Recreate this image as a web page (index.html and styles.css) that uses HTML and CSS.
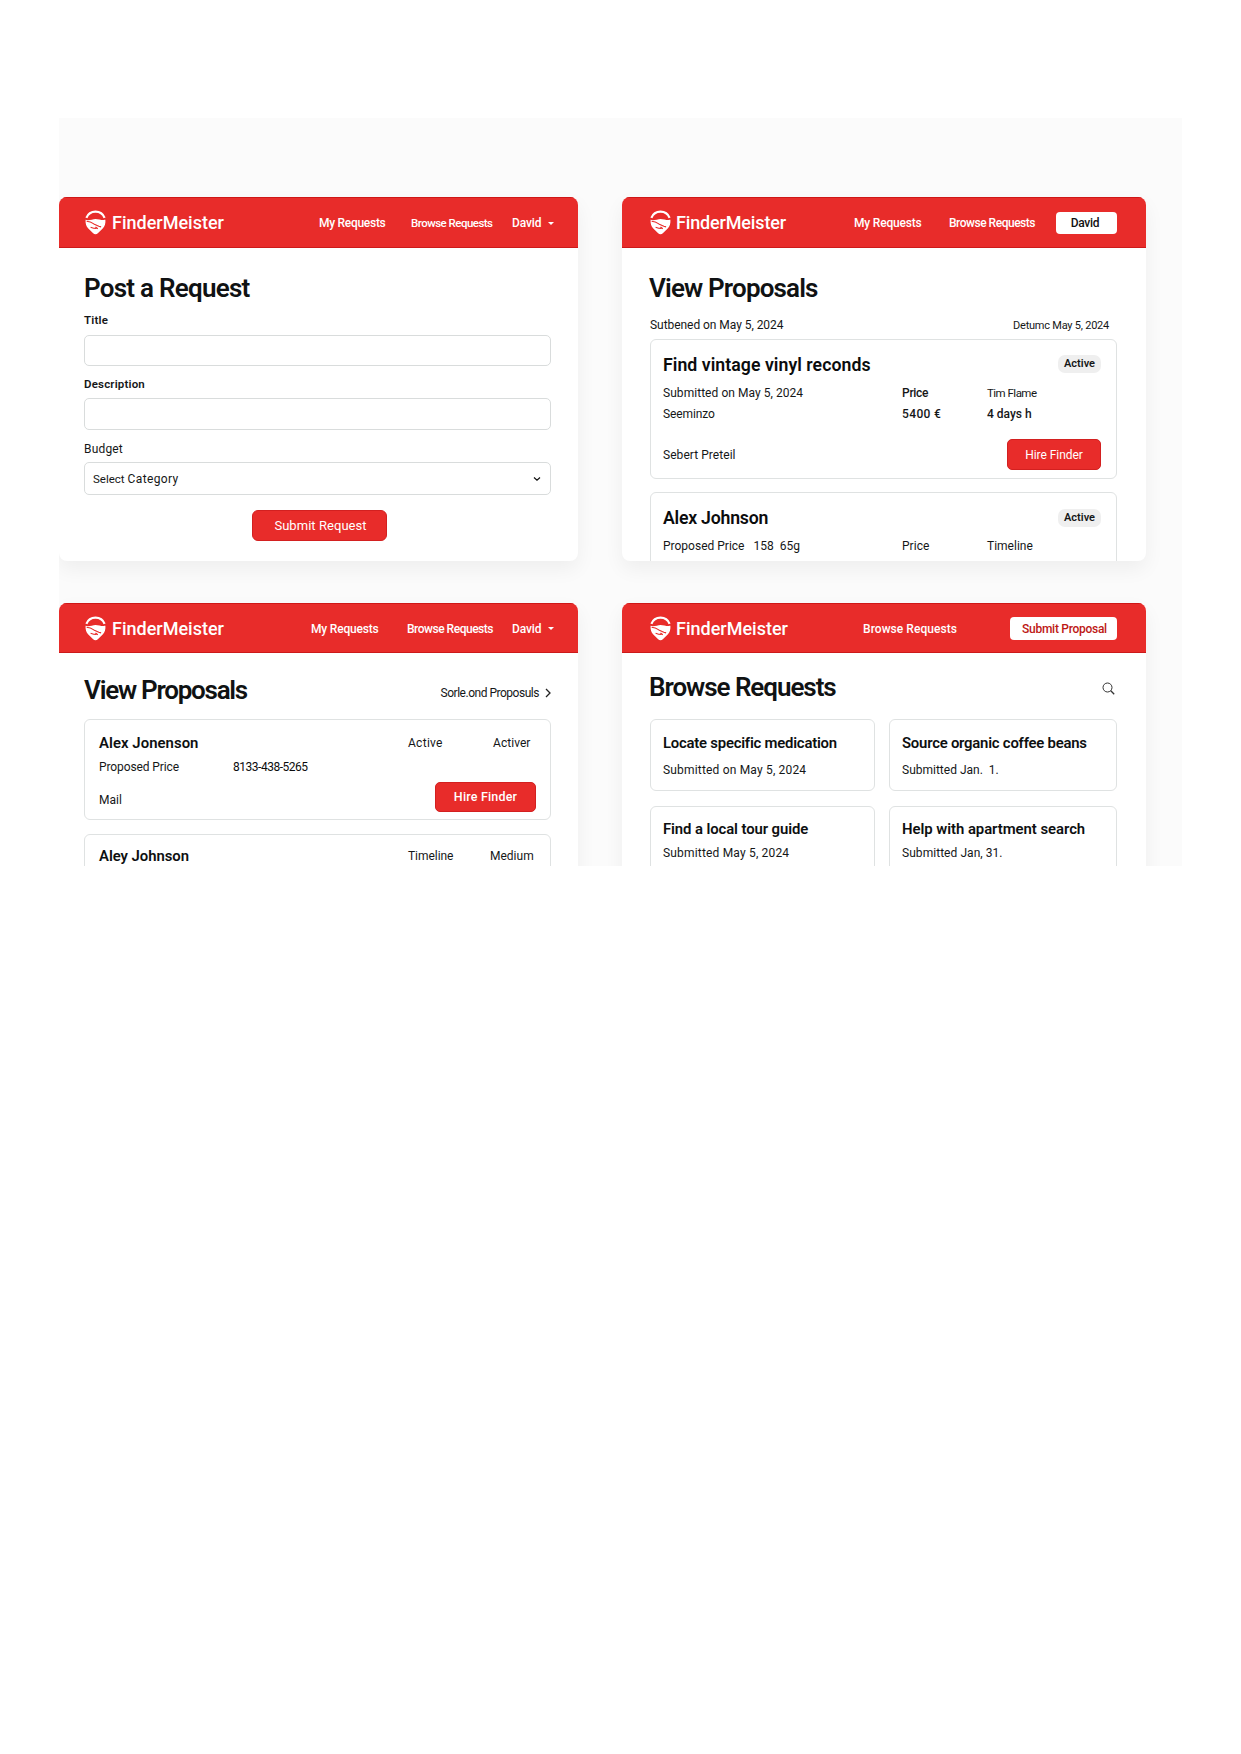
FILE: index.html
```
<!DOCTYPE html>
<html lang="en">
<head>
<meta charset="utf-8">
<title>FinderMeister</title>
<link rel="stylesheet" href="styles.css">
</head>
<body>
<svg class="defs" width="0" height="0">
  <symbol id="pin" viewBox="0 0 21 25">
    <path d="M1.400 7.800C3.200 3.200 6.600 1.600 10.500 1.600s7.300 1.600 9.100 6.200" fill="none" stroke="#fff" stroke-width="2.200"/>
    <path d="M.6 9.800C4 11 7.500 8.900 10.500 8.900s6.500 1.500 9.900.9c.3 3.600-.6 6.600-2.700 8.800l-4.600 4.300c-1.600 1.700-3.600 1.700-5.200 0l-4.600-4.300C1.200 16.400.3 13.400.6 9.800Z" fill="#fff"/>
    <path d="M1.600 11.300c2.800.2 5 1.100 7.200 2.600l5 2.400 2.300.6M5.600 17.200l3 1 2.600.2M10.500 17l2.300 1.700" fill="none" stroke="#e82c2a" stroke-width="1.100"/>
  </symbol>
</svg>
<main class="stage">
  <section class="panel panel-left">
    <header class="bar">
      <svg class="logo"><use href="#pin"/></svg><span class="brand">FinderMeister</span>
      <nav class="nav nav-post"><a class="ls-m28">My Requests</a><a class="tight">Browse Requests</a><a class="ls-m10">David<i class="caret"></i></a></nav>
    </header>
    <form class="post">
      <h1 class="ls-m75">Post a Request</h1>
      <label class="label strong ls-18">Title</label>
      <div class="field field-title"></div>
      <label class="label strong ls-18 label-desc">Description</label>
      <div class="field field-desc"></div>
      <label class="label ls-18 label-budget">Budget</label>
      <div class="field select"><span class="sel">Select</span><span class="ls-37">Category</span>
        <svg class="chev" viewBox="0 0 8 6"><path d="M1 1.500l3 2.600 3-2.600" fill="none" stroke="#111" stroke-width="1.200"/></svg></div>
      <div class="btn btn-submit ls-05">Submit Request</div>
    </form>
  </section>

  <section class="panel panel-right">
    <header class="bar">
      <svg class="logo"><use href="#pin"/></svg><span class="brand brand-snug">FinderMeister</span>
      <nav class="nav nav-view"><a class="ls-m18">My Requests</a><a class="ls-m48">Browse Requests</a><a class="pill david ls-m28">David</a></nav>
    </header>
    <div class="view">
      <h1 class="ls-m85">View Proposals</h1>
      <div class="dates"><span class="ls-m05">Sutbened on May 5, 2024</span><span class="due ls-m23">Detumc May 5, 2024</span></div>
      <article class="card offer">
        <div class="offer-head"><h2 class="ls-05">Find vintage vinyl reconds</h2><span class="badge">Active</span></div>
        <div class="cols first"><span class="ls-05">Submitted on May 5, 2024</span><span class="medium ls-m28">Price</span><span class="tight">Tim Flame</span></div>
        <div class="cols"><span class="ls-m10">Seeminzo</span><span class="medium ls-37">5400 €</span><span class="medium">4 days h</span></div>
        <div class="offer-foot"><span class="ls-05">Sebert Preteil</span><div class="btn btn-hire ls-m05">Hire Finder</div></div>
      </article>
      <article class="card offer offer-next">
        <div class="offer-head"><h2 class="ls-m23">Alex Johnson</h2><span class="badge">Active</span></div>
        <div class="cols"><span class="pair"><span>Proposed Price</span><span>158&nbsp; 65g</span></span><span class="ls-05">Price</span><span>Timeline</span></div>
      </article>
    </div>
  </section>

  <section class="panel panel-left panel-low">
    <header class="bar">
      <svg class="logo"><use href="#pin"/></svg><span class="brand">FinderMeister</span>
      <nav class="nav nav-list"><a class="ls-m18">My Requests</a><a class="ls-m48">Browse Requests</a><a class="ls-m10">David<i class="caret"></i></a></nav>
    </header>
    <div class="list">
      <div class="list-head"><h1 class="ls-m125">View Proposals</h1><span class="more"><span class="ls-m48">Sorle.ond Proposuls</span>
        <svg class="next" viewBox="0 0 6 10"><path d="M1 1l4 4-4 4" fill="none" stroke="#222" stroke-width="1.300"/></svg></span></div>
      <article class="card person">
        <div class="who"><h3 class="ls-05">Alex Jonenson</h3><span class="ls-28">Active</span><span class="shift ls-05">Activer</span></div>
        <div class="price"><span class="ls-m10">Proposed Price</span><span class="ls-m48 dark">8133-438-5265</span></div>
        <div class="person-foot"><span class="mail">Mail</span><div class="btn btn-person ls-18">Hire Finder</div></div>
      </article>
      <article class="card person person-next">
        <div class="who"><h3 class="ls-m05">Aley Johnson</h3><span class="ls-m05">Timeline</span><span>Medium</span></div>
      </article>
    </div>
  </section>

  <section class="panel panel-right panel-low">
    <header class="bar">
      <svg class="logo"><use href="#pin"/></svg><span class="brand">FinderMeister</span>
      <nav class="nav nav-browse"><a class="ls-05">Browse Requests</a><a class="pill wide ls-m28">Submit Proposal</a></nav>
    </header>
    <div class="browse">
      <div class="browse-head"><h1 class="ls-m105">Browse Requests</h1>
        <svg class="search" viewBox="0 0 13 13"><circle cx="5.500" cy="5.500" r="4.500" fill="none" stroke="#333"/><path d="M8.800 8.800l3.400 3.400" stroke="#333" stroke-width="1.300"/></svg></div>
      <div class="tiles">
        <article class="card tile"><h3 class="ls-m23">Locate specific medication</h3><p class="ls-18">Submitted on May 5, 2024</p></article>
        <article class="card tile"><h3 class="ls-m23">Source organic coffee beans</h3><p>Submitted Jan.&nbsp; 1.</p></article>
        <article class="card tile tile-next"><h3 class="ls-m10">Find a local tour guide</h3><p class="ls-18">Submitted May 5, 2024</p></article>
        <article class="card tile tile-next"><h3 class="ls-m05">Help with apartment search</h3><p class="ls-05">Submitted Jan, 31.</p></article>
      </div>
    </div>
  </section>
</main>
</body>
</html>
```
FILE: styles.css
```
* { box-sizing: border-box; }
body { margin: 0; background: #fff; color: #151718; font: 400 12px/16px Roboto, "Liberation Sans", sans-serif; }
h1, h2, h3, p, form { margin: 0; }
h1 { font-size: 26px; line-height: 30px; font-weight: 600; color: #101213; white-space: nowrap; height: 30px; }
.panel-right h1 { margin-left: -1px; }
h2 { font-size: 17.7px; line-height: 22px; font-weight: 600; color: #0b0c0d; }
h3 { font-size: 14.9px; line-height: 20px; font-weight: 590; color: #0e1011; white-space: nowrap; }
span, a, p, label { white-space: nowrap; }
.defs { display: block; }
.medium { font-weight: 500; }
.dark { color: #0b0c0d; }

.stage {
  width: 1123px; height: 748px; margin: 118px 0 0 59px; padding-top: 79px;
  background: #fbfbfb; overflow: hidden;
  display: grid; grid-template-columns: 519px 524px; grid-template-rows: 364px 364px;
  column-gap: 44px; row-gap: 42px;
}
.panel { background: #fff; border-radius: 8px; overflow: hidden; box-shadow: 0 8px 20px rgba(0, 0, 0, .055); }
.bar {
  height: 51px; background: #e82c2a; border-top: 1px solid #cf1717; border-bottom: 1px solid #cc1a1a;
  display: flex; align-items: center; color: #fff; padding-left: 26px;
}
.panel-right .bar { padding-left: 28px; }
.panel-low .bar { height: 50px; }
.logo { width: 21px; height: 25px; flex: none; }
.brand { font-size: 18px; line-height: 24px; font-weight: 500; margin-left: 6px; width: 114px; flex: none; padding-top: 1px; letter-spacing: 0; }
.panel-right .brand { margin-left: 5px; width: 115px; }
.brand-snug { letter-spacing: -.15px; }
.nav { display: grid; align-items: center; font-weight: 480; padding-top: 1px; }
.nav a { display: flex; align-items: center; }
.nav-post { grid-template-columns: 92px 101px 60px; margin-left: 93px; }
.nav-view { grid-template-columns: 95px 107px 61px; margin-left: 63px; }
.nav-list { grid-template-columns: 96px 105px 60px; margin-left: 85px; }
.nav-browse { grid-template-columns: 147px 107px; margin-left: 72px; }
.caret { border: 3px solid transparent; border-top: 3.5px solid #fff; border-bottom: 0; margin-left: 6px; }
.nav .pill { height: 22px; background: #fff; border-radius: 4px; justify-content: center; color: #111; font-weight: 550; }
.nav .david { padding-right: 3px; }
.nav .wide { height: 23px; color: #bd1715; padding-left: 2px; }

.field { width: 467px; border: 1px solid #d9dcdc; border-radius: 5px; }
.btn { background: #e82c2a; border: 1px solid #d32020; border-radius: 5px; color: #fff; font-weight: 450; display: flex; align-items: center; justify-content: center; }

.post { padding: 25px 0 0 25px; display: flex; flex-direction: column; }
.label { display: block; margin-top: 9px; font-weight: 430; }
.strong { font-size: 11.5px; font-weight: 600; }
.field-title { height: 31px; margin-top: 7px; }
.label-desc { margin-top: 10px; }
.field-desc { height: 32px; margin-top: 6px; }
.label-budget { margin-top: 11px; }
.select { height: 33px; margin-top: 5px; padding: 0 9px 0 8px; display: flex; align-items: center; font-weight: 430; }
.sel { font-size: 11.5px; margin-right: 3px; }
.chev { width: 8px; height: 6px; margin-left: auto; }
.btn-submit { width: 135px; height: 31px; margin: 15px 0 0 168px; padding-left: 2px; font-size: 13px; border-radius: 6px; }

.view { padding: 25px 0 0 28px; }
.dates { margin-top: 14px; width: 459px; display: flex; justify-content: space-between; }
.due { font-size: 11px; font-weight: 430; padding-top: 1px; }
.card { border: 1px solid #dfe2e2; border-radius: 6px; }
.offer { width: 467px; height: 140px; margin-top: 5px; padding: 14px 15px 0 12px; }
.offer-next { margin-top: 13px; }
.offer-head { display: flex; justify-content: space-between; align-items: flex-start; }
.badge { margin-top: 1px; width: 43px; height: 18px; border-radius: 7px; background: #efefef; font-size: 11px; font-weight: 600; display: flex; align-items: center; justify-content: center; }
.offer-next .badge { margin-top: 2px; }
.cols { display: grid; grid-template-columns: 239px 85px auto; height: 16px; margin-top: 5px; }
.cols.first { margin-top: 9px; }
.offer-next .cols { margin-top: 9px; }
.pair { display: flex; gap: 9px; }
.offer-foot { display: flex; justify-content: space-between; align-items: center; margin-top: 17px; }
.btn-hire { width: 94px; height: 31px; }

.list { padding: 22px 0 0 25px; }
.list-head { width: 467px; display: flex; justify-content: space-between; align-items: center; }
.more { display: flex; align-items: center; gap: 6px; padding-top: 5px; }
.next { width: 6px; height: 10px; }
.person { width: 467px; height: 101px; margin-top: 14px; padding: 13px 14px 0; }
.who { display: grid; grid-template-columns: 309px 82px auto; align-items: center; }
.shift { margin-left: 3px; }
.price { display: grid; grid-template-columns: 134px auto; margin-top: 6px; }
.person-foot { display: flex; justify-content: space-between; align-items: center; margin-top: 7px; }
.mail { padding-top: 5px; }
.btn-person { width: 101px; height: 30px; font-size: 12.5px; font-weight: 500; }
.person-next { padding-top: 11px; }

.browse { padding: 19px 0 0 28px; }
.browse-head { width: 467px; display: flex; justify-content: space-between; align-items: center; padding-right: 2px; }
.search { width: 13px; height: 13px; margin-top: 3px; }
.tiles { margin-top: 17px; display: grid; grid-template-columns: 225px 228px; grid-template-rows: 72px 72px; gap: 15px 14px; }
.tile { padding: 13px 12px 0; }
.tile p { margin-top: 9px; }
.tile-next { padding-top: 12px; }
.tile-next p { margin-top: 6px; }

/* Letter spacing, in hundredths of a pixel; "m" is negative. */
.ls-m125 { letter-spacing: -1.25px; }
.ls-m105 { letter-spacing: -1.05px; }
.ls-m85 { letter-spacing: -.85px; }
.ls-m75 { letter-spacing: -.75px; }
.ls-m48 { letter-spacing: -.48px; }
.ls-m28 { letter-spacing: -.28px; }
.ls-m23 { letter-spacing: -.23px; }
.ls-m18 { letter-spacing: -.18px; }
.ls-m10 { letter-spacing: -.1px; }
.ls-m05 { letter-spacing: -.05px; }
.ls-05 { letter-spacing: .05px; }
.ls-18 { letter-spacing: .18px; }
.ls-28 { letter-spacing: .28px; }
.ls-37 { letter-spacing: .37px; }
.tight { font-size: 11.500px; letter-spacing: -.52px; }
```
